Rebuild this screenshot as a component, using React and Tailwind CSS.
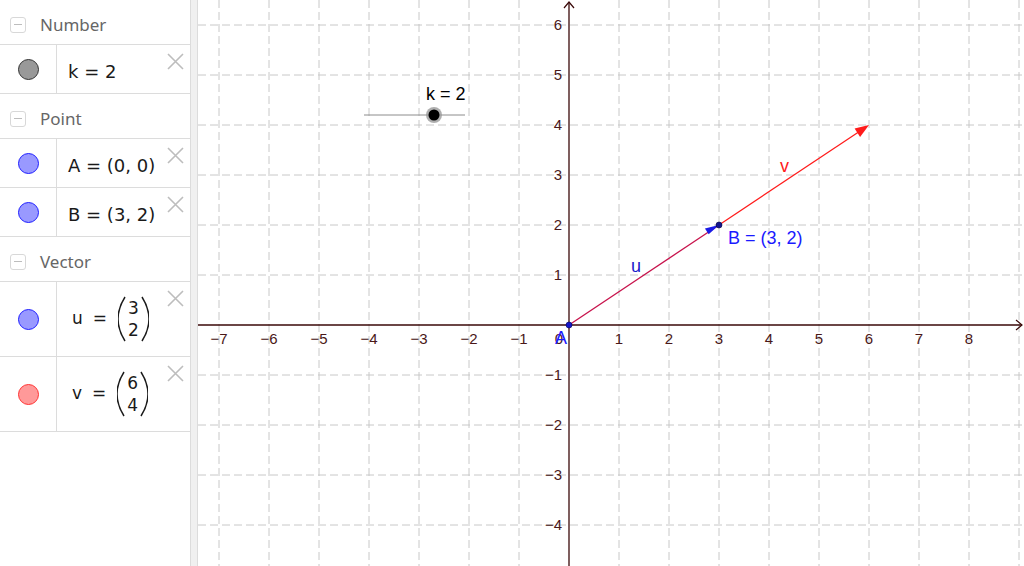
import React from 'react';

function Header({ label }) {
  return (
    <div className="h-[45px] border-b border-[#dcdcdc] flex items-center pl-[10px] pt-[5px] gap-[14px]">
      <div className="w-[16px] h-[16px] rounded-[3px] border border-[#d8d8d8] flex items-center justify-center">
        <div className="w-[8px] h-[1px] bg-[#bdbdbd]" />
      </div>
      <span className="text-[17px] text-[#666666] font-['Noto_Sans','Open_Sans',sans-serif]">{label}</span>
    </div>
  );
}

function CloseX() {
  return (
    <svg className="absolute top-[8px] right-[6px]" width="17" height="17" viewBox="0 0 17 17">
      <path d="M1 1 L16 16 M16 1 L1 16" stroke="#bdbdbd" strokeWidth="1.6" />
    </svg>
  );
}

function Row({ dot, tall, children }) {
  return (
    <div className={`${tall ? 'h-[75px]' : 'h-[49px]'} border-b border-[#dcdcdc] flex relative`}>
      <div className="w-[57px] border-r border-[#dcdcdc] flex items-center justify-center">
        <div className={`w-[21px] h-[21px] rounded-full border ${dot}`} />
      </div>
      <div className="flex-1 flex items-center pl-[11px] pt-[4px] text-[18px] text-[#1a1a1a] font-['DejaVu_Sans','Noto_Sans',sans-serif]">
        {children}
      </div>
      <CloseX />
    </div>
  );
}

function Paren({ right }) {
  return (
    <svg width="8" height="46" viewBox="0 0 8 46">
      <path
        d={right ? 'M1 1 Q8 12 8 23 Q8 34 1 45' : 'M7 1 Q0 12 0 23 Q0 34 7 45'}
        stroke="#1a1a1a"
        strokeWidth="1.5"
        fill="none"
      />
    </svg>
  );
}

function VecText({ name, a, b }) {
  return (
    <div className="flex items-center pl-[4px] -mt-[4px] text-[17px]">
      <span>{name}</span>
      <span className="ml-[10px] mr-[11px]">=</span>
      <Paren />
      <div className="flex flex-col items-center leading-[22px] px-[2px]">
        <span>{a}</span>
        <span>{b}</span>
      </div>
      <Paren right />
    </div>
  );
}

function Graph() {
  const xs = [];
  for (let i = 0; i <= 16; i++) xs.push(219 + 50 * i);
  const ys = [];
  for (let j = 0; j <= 10; j++) ys.push(25 + 50 * j);
  const axis = '#3a0808';
  const lbl = '#4a1818';
  const tick = "text-[15px] font-['Liberation_Sans',Arial,sans-serif]";
  const big = "text-[18px] font-['Liberation_Sans',Arial,sans-serif]";
  return (
    <svg className="block w-full h-full" viewBox="198 0 826 566">
      <rect x="198" y="0" width="826" height="566" fill="#ffffff" />
      {xs.filter(x => x !== 569).map(x => (
        <line key={'v' + x} x1={x} y1="0" x2={x} y2="566" stroke="#c8c8c8" strokeWidth="1" strokeDasharray="8 4" />
      ))}
      {ys.filter(y => y !== 325).map(y => (
        <line key={'h' + y} x1="198" y1={y} x2="1024" y2={y} stroke="#c8c8c8" strokeWidth="1" strokeDasharray="8 4" />
      ))}

      {/* axes */}
      <line x1="198" y1="325" x2="1022" y2="325" stroke={axis} strokeWidth="1.3" />
      <path d="M1016 320 L1022 325 L1016 330" stroke={axis} strokeWidth="1.2" fill="none" />
      <line x1="569" y1="2" x2="569" y2="566" stroke={axis} strokeWidth="1.3" />
      <path d="M564 8 L569 2 L574 8" stroke={axis} strokeWidth="1.2" fill="none" />

      {[-7, -6, -5, -4, -3, -2, -1, 1, 2, 3, 4, 5, 6, 7, 8].map(n => (
        <text key={'xl' + n} x={569 + 50 * n} y="344" textAnchor="middle" fill={lbl} className={tick}>
          {n < 0 ? '\u2212' + -n : n}
        </text>
      ))}
      {[6, 5, 4, 3, 2, 1, -1, -2, -3, -4].map(n => (
        <text key={'yl' + n} x="562" y={325 - 50 * n + 5} textAnchor="end" fill={lbl} className={tick}>
          {n < 0 ? '\u2212' + -n : n}
        </text>
      ))}
      <text x="563" y="344" textAnchor="end" fill={lbl} className={tick}>0</text>

      {/* slider */}
      <line x1="364" y1="115" x2="465" y2="115" stroke="#8c8c8c" strokeWidth="1" />
      <circle cx="434" cy="115" r="8" fill="#9a9a9a" opacity="0.8" />
      <circle cx="434" cy="115" r="5.5" fill="#000000" />
      <text x="426" y="100" fill="#000000" className={big}>k = 2</text>

      {/* vectors */}
      <line x1="719" y1="225" x2="859" y2="131.7" stroke="#ff1a1a" strokeWidth="1.2" />
      <line x1="569" y1="325" x2="719" y2="225" stroke="#c8124c" strokeWidth="1.3" />
      <polygon points="869,125 860.1,136.9 854.6,128.6" fill="#ff1a1a" />
      <polygon points="719,225 708.7,234.2 704.9,228.6" fill="#1a1ae6" />

      {/* points */}
      <circle cx="569" cy="325" r="3" fill="#1414c8" stroke="#00005a" strokeWidth="0.6" />
      <circle cx="719" cy="225" r="3" fill="#14148c" stroke="#000040" strokeWidth="0.6" />

      {/* labels */}
      <text x="555" y="344" fill="#1a1aff" className={big}>A</text>
      <text x="728" y="244" fill="#1a1aff" className={big}>B = (3, 2)</text>
      <text x="631" y="272" fill="#1a1acc" className={big}>u</text>
      <text x="780" y="172" fill="#ff1a1a" className={big}>v</text>
    </svg>
  );
}

export default function App() {
  return (
    <div className="w-[1024px] h-[566px] flex overflow-hidden bg-white">
      <div className="w-[191px] h-full border-r border-[#dcdcdc] flex flex-col shrink-0">
        <Header label="Number" />
        <Row dot="bg-[#999999] border-[#333333]">k = 2</Row>
        <Header label="Point" />
        <Row dot="bg-[#9999ff] border-[#1f1fff]">A = (0, 0)</Row>
        <Row dot="bg-[#9999ff] border-[#1f1fff]">B = (3, 2)</Row>
        <Header label="Vector" />
        <Row dot="bg-[#9999ff] border-[#1f1fff]" tall>
          <VecText name="u" a="3" b="2" />
        </Row>
        <Row dot="bg-[#ff9999] border-[#ff3333]" tall>
          <VecText name="v" a="6" b="4" />
        </Row>
      </div>
      <div className="w-[7px] h-full bg-[#f0f0f0] border-r border-[#dcdcdc] shrink-0" />
      <div className="flex-1 h-full">
        <Graph />
      </div>
    </div>
  );
}
